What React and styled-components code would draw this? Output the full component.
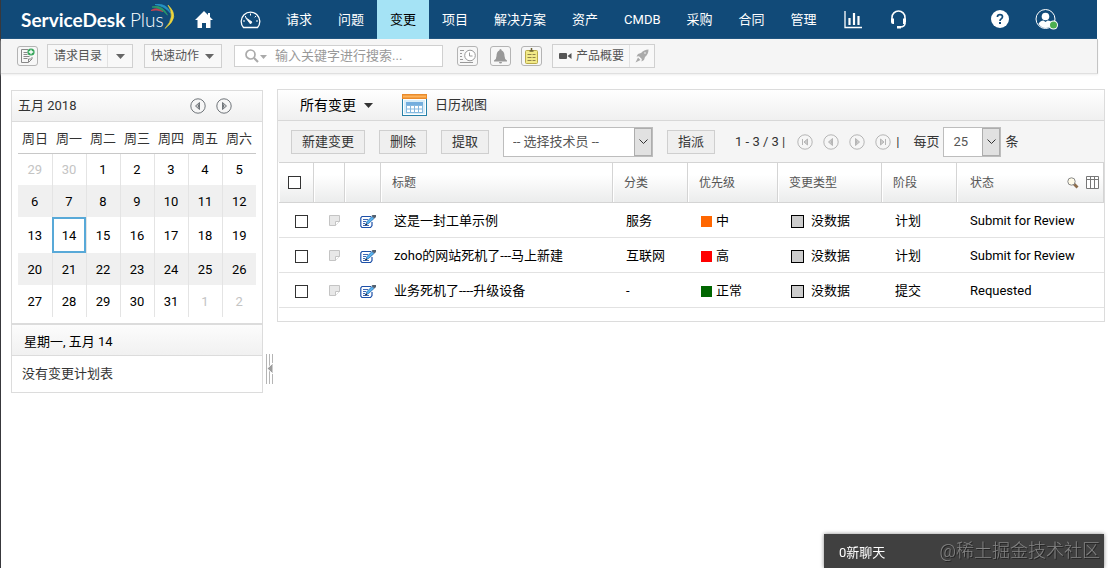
import React from "react";
import styled, { createGlobalStyle, css } from "styled-components";

const GlobalStyle = createGlobalStyle`
  *, *::before, *::after { box-sizing: border-box; }
  body {
    margin: 0;
    background: #fff;
    color: #000;
    font: 13px/18px Roboto, "Noto Sans CJK SC", sans-serif;
  }
  button, input, select { font: inherit; color: inherit; margin: 0; }
  a { color: inherit; text-decoration: none; }
  svg { display: block; flex: none; }
`;

const Page = styled.div`
  min-height: 100vh;
  border-left: 1px solid #38383c;
`;

/* Top navigation */
const TopBar = styled.header`
  display: flex;
  align-items: center;
  height: 39px;
  margin-right: 11px;
  padding: 0 39px 0 20px;
  background: #114a78;
  color: #fff;
`;

const Logo = styled.a`
  position: relative;
  width: 174px;
  font: 700 19px/24px Lato, sans-serif;
  white-space: nowrap;
  span { font-weight: 300; }
  svg { position: absolute; left: 127px; top: -6px; }
`;

const NavIcon = styled.a`
  display: flex;
  width: ${(p) => p.$width}px;
`;

const NavList = styled.nav`
  display: flex;
  align-self: stretch;
  flex: 1;
`;

const NavItem = styled.a`
  display: flex;
  align-items: center;
  padding: 0 ${(p) => (p.$icon ? 14 : 13)}px;
  white-space: nowrap;
  ${(p) => p.$active && css`background: #a5e3f5; color: #000;`}
`;

/* Quick action strip */
const ActionBar = styled.div`
  display: flex;
  align-items: center;
  height: 35px;
  margin-right: 10px;
  padding: 0 16px;
  background: #f5f5f5;
  border-right: 1px solid #c4c4c4;
  border-bottom: 1px solid #e0e0e0;
  box-shadow: 0 1px 2px #eee;
  color: #555;
  font-size: 12px;
`;

const IconButton = styled.button`
  display: flex;
  align-items: center;
  justify-content: center;
  width: 21px;
  height: 20px;
  padding: 0;
  margin-right: ${(p) => p.$gap}px;
  border: 1px solid #b4b4b4;
  border-radius: 3px;
  background: #f7f7f7;
`;

const SplitButton = styled.button`
  display: flex;
  align-items: stretch;
  height: 24px;
  padding: 0;
  margin-right: 11px;
  border: 1px solid #d0d0d0;
  background: #f8f8f8;
  white-space: nowrap;
`;

const SplitLabel = styled.span`
  display: flex;
  align-items: center;
  gap: 4px;
  padding: 0 5px 0 6px;
`;

const SplitEnd = styled.span`
  display: flex;
  align-items: center;
  justify-content: ${(p) => (p.$plain ? "flex-start" : "center")};
  width: ${(p) => p.$width}px;
  border-left: 1px solid ${(p) => (p.$plain ? "transparent" : "#e2e2e2")};
`;

const SearchBox = styled.label`
  display: flex;
  align-items: center;
  gap: 7px;
  width: 209px;
  height: 22px;
  margin: 0 14px 0 1px;
  padding-left: 10px;
  border: 1px solid #d0d0d0;
  background: #fff;
  font-size: 13px;
  input {
    flex: 1;
    min-width: 0;
    padding: 0;
    border: 0;
    outline: 0;
    background: none;
  }
  input::placeholder { color: #999; opacity: 1; }
`;

/* Body */
const Body = styled.main`
  display: flex;
  align-items: flex-start;
  padding: 15px 3px 0 10px;
`;

const Panel = styled.section`
  border: 1px solid #dcdcdc;
  background: #fff;
`;

const SidePanel = styled(Panel)`
  flex: none;
  width: 252px;
  margin-top: 1px;
`;

const MainPanel = styled(Panel)`
  flex: 1;
  min-width: 0;
  padding-bottom: 13px;
`;

const SideHead = styled.div`
  display: flex;
  align-items: center;
  gap: 10px;
  height: 31px;
  padding: 0 30px 0 6px;
  border-bottom: 1px solid #dcdcdc;
  background: linear-gradient(#fdfdfd, #f0f0f0);
  color: #333;
  h2 { flex: 1; margin: 0; font-size: 13px; font-weight: 400; }
`;

const RoundButton = styled.button`
  display: flex;
  padding: 0;
  border: 0;
  background: none;
  color: ${(p) => (p.$faint ? "#b5b5b5" : "#70757a")};
`;

const Calendar = styled.table`
  width: 238px;
  margin: 0 6px 6px;
  border-collapse: collapse;
  table-layout: fixed;
  text-align: center;
  th {
    height: 31px;
    padding: 4px 0 0;
    border-bottom: 1px solid #c8c8c8;
    font-weight: 400;
    color: #333;
  }
`;

const Week = styled.tr`
  height: ${(p) => (p.$tall ? 36 : 32)}px;
  background: ${(p) => (p.$shade ? "#f0f0f0" : "#fff")};
`;

const Day = styled.td`
  padding: 2px 0 0;
  border-right: 1px solid #e4e4e4;
  color: ${(p) => (p.$out ? "#c4c4c4" : "#000")};
  &:last-child { border-right: 0; }
  ${(p) => p.$today && css`outline: 2px solid #58a9d8; outline-offset: -2px;`}
`;

const AgendaHead = styled.h3`
  height: 33px;
  margin: 0;
  padding: 8px 12px 0;
  border-top: 2px solid #dcdcdc;
  border-bottom: 1px solid #dcdcdc;
  background: linear-gradient(#fcfcfc, #f1f1f1);
  font-size: 13px;
  font-weight: 400;
`;

const AgendaText = styled.p`
  margin: 0;
  padding: 9px 10px;
  color: #333;
`;

const Splitter = styled.button`
  align-self: center;
  display: flex;
  width: 14px;
  margin-top: 255px;
  padding: 0 3px;
  border: 0;
  background: none;
`;

const ViewBar = styled.div`
  display: flex;
  align-items: center;
  gap: 29px;
  height: 31px;
  padding: 0 22px;
  border-bottom: 1px solid #d8d8d8;
  background: linear-gradient(#fff, #f0f0f0);
`;

const ViewButton = styled.button`
  display: flex;
  align-items: center;
  gap: 8px;
  padding: 0;
  border: 0;
  background: none;
  font-size: ${(p) => (p.$main ? 14 : 13)}px;
  color: ${(p) => (p.$main ? "#000" : "#333")};
`;

const ToolBar = styled.div`
  display: flex;
  align-items: center;
  gap: 14px;
  height: 41px;
  padding: 0 13px;
  background: #f5f5f5;
  color: #333;
  white-space: nowrap;
`;

const PushButton = styled.button`
  height: 24px;
  padding: 0 10px;
  border: 1px solid #cfcfcf;
  background: #efefef;
  line-height: 20px;
`;

const SelectBox = styled.span`
  display: grid;
  grid-template-columns: minmax(0, 1fr) 18px;
  width: ${(p) => p.$width}px;
  height: 30px;
  border: 1px solid #bdbdbd;
  background: #fff;
  color: #555;
  select {
    grid-area: 1 / 1 / 2 / 3;
    appearance: none;
    padding: 0 20px 0 9px;
    border: 0;
    background: none;
  }
  span {
    grid-area: 1 / 2;
    display: flex;
    align-items: center;
    justify-content: center;
    border: 1px solid #adadad;
    background: #e1e1e1;
    pointer-events: none;
  }
`;

const Pager = styled.div`
  display: flex;
  align-items: center;
  margin-left: 6px;
`;

const PagerButtons = styled.div`
  display: flex;
  gap: 10px;
  margin: 0 5px 0 12px;
`;

const PageSize = styled.label`
  display: flex;
  align-items: center;
  gap: 4px;
`;

const Grid = styled.table`
  width: calc(100% - 1px);
  margin-left: 1px;
  border-collapse: separate;
  border-spacing: 0;
  table-layout: fixed;
  text-align: left;
`;

const HeadCell = styled.th`
  height: 41px;
  padding: 0 11px;
  border: solid #d4d4d4;
  border-width: 1px 1px 1px 0;
  box-shadow: inset 1px 0 #fff;
  background: linear-gradient(#fff 30%, #ebecec);
  color: #555;
  font-size: 12px;
  font-weight: 400;
  &:first-child { padding-left: 9px; }
`;

const HeadTools = styled.div`
  display: flex;
  align-items: center;
  justify-content: space-between;
  margin: 0 -7px 0 2px;
  div { display: flex; align-items: center; gap: 7px; }
`;

const Cell = styled.td`
  height: 35px;
  padding: 2px ${(p) => (p.$icon ? 0 : 13)}px 0;
  padding-left: ${(p) => (p.$icon ? 15 : 13)}px;
  border-bottom: 1px solid #e2e2e2;
  white-space: nowrap;
  &:first-child { padding-left: 16px; }
`;

const Check = styled.input`
  appearance: none;
  display: block;
  width: 13px;
  height: 13px;
  border: 1px solid #333;
  background: #fff;
`;

const Tagged = styled.span`
  display: flex;
  align-items: center;
  gap: ${(p) => (p.$boxed ? 7 : 4)}px;
  &::before {
    content: "";
    width: ${(p) => (p.$boxed ? 13 : 11)}px;
    height: ${(p) => (p.$boxed ? 13 : 11)}px;
    border: ${(p) => (p.$boxed ? "1px solid #000" : "0")};
    background: ${(p) => p.$color};
  }
`;

const ChatBar = styled.aside`
  position: fixed;
  right: 4px;
  bottom: 0;
  display: flex;
  align-items: center;
  justify-content: space-between;
  width: 280px;
  height: 34px;
  padding: 0 4px 0 15px;
  background: #404040;
  box-shadow: 0 0 4px #888;
  color: #fff;
  white-space: nowrap;
`;

const ChatToggle = styled.button`
  padding: 4px 0 0;
  border: 0;
  background: none;
`;

const Mark = styled.span`
  font-size: 18px;
  font-weight: 300;
  line-height: 24px;
  color: #858585;
  text-shadow: 1px 1px #222;
`;

const Caret = ({ color = "#666" }) => (
  <svg width="9" height="5"><path d="M0 0h9L4.500 5z" fill={color} /></svg>
);

const Chevron = () => (
  <svg width="9" height="6" fill="none" stroke="#333"><path d="M.5.5l4 4 4-4" /></svg>
);

const Swoosh = () => (
  <svg width="28" height="28" viewBox="0 0 28 28" fill="none">
    <path d="M3 8.500Q9 4.500 15 9.500Q9 7 3 8.500Z" fill="#c8434f" stroke="#c8434f" strokeWidth=".8" />
    <path d="M4 5Q14 2 19.500 13Q12 5 4 5Z" fill="#2c9a68" stroke="#2c9a68" strokeWidth=".8" />
    <path d="M7 2.500Q19 1 22.500 11Q16 3.500 7 2.500Z" fill="#2593c4" stroke="#2593c4" strokeWidth=".8" />
    <path d="M20 3Q33 15 17 26.500Q28 15 20 3Z" fill="#ecd53c" stroke="#ecd53c" strokeWidth=".6" />
  </svg>
);

const HomeIcon = () => (
  <svg width="18" height="18" viewBox="0 0 18 18" fill="#fff">
    <path d="M9 0L0 9h2.500v8h4.500v-5h4v5h4.500V9H18l-3-3V2h-2v2z" />
  </svg>
);

const GaugeIcon = () => (
  <svg width="21" height="18" viewBox="0 0 21 18" fill="none" stroke="#fff" strokeWidth="1.300">
    <path d="M3.500 16.500A9.300 9.300 0 1 1 17.500 16.500Z" />
    <path d="M10.500 2.500v2M3 10h2M16 10h2M5 5l1.300 1.300M16 5l-1.300 1.300" strokeWidth="1" />
    <path d="M5.500 6.500l6.500 4.500-1.500 2z" fill="#fff" strokeWidth=".8" />
  </svg>
);

const ChartIcon = () => (
  <svg width="18" height="18" viewBox="0 0 18 18" fill="none" stroke="#fff">
    <path d="M1 0v16.500h17" strokeWidth="1.300" />
    <path d="M5.500 7v7M10 2v12M14.500 5v9" strokeWidth="2.200" />
  </svg>
);

const HeadsetIcon = () => (
  <svg width="17" height="19" viewBox="0 0 17 19" fill="none" stroke="#fff" strokeWidth="1.600">
    <path d="M2 10V7.500a6.500 6.500 0 0 1 13 0V10" />
    <path d="M15 13q0 4-5 4" />
    <path d="M1 8.500h3v5.500H3q-2 0-2-2zM16 8.500h-3v5.500h1q2 0 2-2z" fill="#fff" stroke="none" />
    <rect x="7" y="16" width="4" height="2.500" fill="#fff" stroke="none" />
  </svg>
);

const HelpIcon = () => (
  <svg width="20" height="20" viewBox="0 0 20 20">
    <circle cx="10" cy="9" r="9" fill="#fff" />
    <path d="M7.400 7Q7.500 4.700 10 4.700T12.500 6.800Q12.500 8 11.200 8.900T10 11" fill="none" stroke="#114a78" strokeWidth="1.700" />
    <rect x="9" y="12" width="2" height="2" fill="#114a78" />
  </svg>
);

const UserIcon = () => (
  <svg width="24" height="22" viewBox="0 0 24 22">
    <circle cx="10.500" cy="10" r="9.500" fill="none" stroke="#fff" />
    <circle cx="10.500" cy="7.500" r="3.800" fill="#fff" />
    <path d="M3.500 15q1.500-3.500 5-3.500l2 1.500 2-1.500q4 0 5 3.500-3 4-7 4t-7-4z" fill="#fff" />
    <circle cx="18.500" cy="16" r="4.500" fill="#fff" />
    <circle cx="18.500" cy="16" r="3.500" fill="#4caf50" />
  </svg>
);

const NewRequestIcon = () => (
  <svg width="15" height="16" viewBox="0 0 15 16" fill="none" stroke="#888">
    <path d="M8 1.500H1.500v13h7l3.500-3.500V9M8.500 14v-3h3M3.500 4.500h4M3.500 6.500h4M3.500 8.500h6M3.500 10.500h4" />
    <circle cx="11" cy="4" r="3.600" fill="#37a65c" stroke="none" />
    <path d="M11 1.800v4.400M8.800 4h4.400" stroke="#fff" strokeWidth="1.300" />
  </svg>
);

const SearchIcon = () => (
  <svg width="23" height="14" viewBox="0 0 23 14" fill="none" stroke="#aaa">
    <circle cx="5.500" cy="5.500" r="4.500" strokeWidth="1.700" />
    <path d="M9 9l4 4" strokeWidth="2.200" />
    <path d="M15 6h7l-3.500 4z" fill="#aaa" stroke="none" />
  </svg>
);

const RecentIcon = () => (
  <svg width="17" height="16" viewBox="0 0 17 16" fill="none" stroke="#999">
    <circle cx="11" cy="7.500" r="5.300" fill="#fff" />
    <path d="M10.500 4.500v3.500h3M1 2.500h4M1 5.500h2M1 8.500h2M1 11.500h3M1 14.500h13" />
  </svg>
);

const BellIcon = () => (
  <svg width="15" height="15" viewBox="0 0 15 15" fill="#999">
    <path d="M7.500 0q1.200 0 1.200 1.500Q11.500 2.500 11.500 7q0 3 2.500 4.500v1H1v-1Q3.500 10 3.500 7q0-4.500 2.800-5.500Q6.300 0 7.500 0zM6 13h3q0 1.500-1.500 1.500T6 13z" />
  </svg>
);

const NotesIcon = () => (
  <svg width="15" height="17" viewBox="0 0 15 17" fill="none">
    <rect x="1.500" y="2.500" width="12" height="13" rx="1" fill="#f2ea88" stroke="#b9aa4a" />
    <path d="M5.500 3h4M7.500 0v3" stroke="#6b6130" strokeWidth="1.500" />
    <path d="M3.500 6.500h4M8.500 6.500h3M3.500 9.500h4M8.500 9.500h3M3.500 12.500h4M8.500 12.500h3" stroke="#91834a" />
  </svg>
);

const VideoIcon = () => (
  <svg width="13" height="8" viewBox="0 0 13 8" fill="#555">
    <rect y="1" width="8" height="6" rx="1" /><path d="M8.500 4L12.500 1v6z" />
  </svg>
);

const RocketIcon = () => (
  <svg width="14" height="14" viewBox="0 0 14 14" fill="#aaa">
    <path d="M13.500.5Q9 .5 6 4L3 5 1.500 7.500l2.500-.3 2.800 2.800-.3 2.500L9 11l1-3Q13.500 5 13.500.5z" />
    <path d="M3 8.500L.5 13.500l5-2.500z" />
    <circle cx="10" cy="4" r=".8" fill="#f8f8f8" />
  </svg>
);

const RoundArrow = ({ kind }) => (
  <svg width="16" height="16" viewBox="0 0 16 16" fill="none" stroke="currentColor">
    <circle cx="8" cy="8" r="7.200" fill="#f6f6f6" />
    {kind === "prev" && <path d="M9.500 4.500v7L5.500 8zM8.500 6.500v3" fill="#ccc" />}
    {kind === "next" && <path d="M6.500 4.500v7l4-3.500zM7.500 6.500v3" fill="#ccc" />}
    {kind === "first" && <path d="M5.500 5v6M10.500 5v6L7 8z" fill="#ccc" />}
    {kind === "last" && <path d="M10.500 5v6M5.500 5v6L9 8z" fill="#ccc" />}
  </svg>
);

const CalendarIcon = () => (
  <svg width="25" height="22" viewBox="0 0 25 22">
    <rect x=".5" y=".5" width="24" height="21" fill="#fff" stroke="#2580a8" />
    <path d="M0 0h25v5H0z" fill="#e98b2c" />
    <path d="M1 1.500h23v2H1z" fill="#ffb45c" />
    <path d="M2 6h21v14H2z" fill="#d8edf8" />
    <path d="M4 8h17v3H4z" fill="#74aede" />
    <path d="M4 11h17v8H4z" fill="#fff" />
    <path d="M4 11.500h17M4 15h17M4 18.500h17M4.500 11v8M8.500 11v8M12.500 11v8M16.500 11v8M20.500 11v8" stroke="#85b8df" />
  </svg>
);

const SplitterIcon = () => (
  <svg width="8" height="30" viewBox="0 0 8 30" fill="none">
    <path d="M.5 0v30M3.500 0v30M6.500 0v30" stroke="#b5b5b5" />
    <path d="M7 9v11L1 14.500z" fill="#9c9c9c" stroke="#fff" />
  </svg>
);

const NoteIcon = () => (
  <svg width="12" height="12" viewBox="0 0 12 12" fill="#e8e8e8" stroke="#c4c4c4">
    <path d="M.5.5h10v6l-4 4h-6z" /><path d="M10.500 6.500h-4v4" fill="#fff" />
  </svg>
);

const EditIcon = () => (
  <svg width="16" height="13" viewBox="0 0 16 13" fill="none">
    <path d="M11 1.500H2L.8 3v8L2 12.500h8.500l1.500-2V7" fill="#fff" stroke="#1d50a8" strokeWidth="1.200" />
    <path d="M3 4.500h5M3 6.500h3M3 8.500h2M3 10.500h6" stroke="#3c67b5" />
    <path d="M5.500 10L7 6.500 12 1.500l2 2-5.500 5z" fill="#55b3ed" stroke="#2b68ae" strokeWidth=".8" />
    <path d="M11.500 1l1-1H16v2l-1.500 1.500z" fill="#53606f" />
    <path d="M5 10.500l1-2 1.200 1z" fill="#111" />
  </svg>
);

const FindIcon = () => (
  <svg width="12" height="12" viewBox="0 0 12 12" fill="none">
    <path d="M6.500 6.500l4 4" stroke="#8c6c4a" strokeWidth="2.800" />
    <circle cx="4.500" cy="4.500" r="3.700" fill="#fffbe9" stroke="#888" />
  </svg>
);

const ColumnsIcon = () => (
  <svg width="13" height="13" viewBox="0 0 13 13" fill="#fff" stroke="#777">
    <path d="M.5.5h12v12H.5zM.5 3.500h12M4.500.5v12M8.500.5v12" />
  </svg>
);

const NAV = ["请求", "问题", "变更", "项目", "解决方案", "资产", "CMDB", "采购", "合同", "管理"];
const WEEKDAYS = ["周日", "周一", "周二", "周三", "周四", "周五", "周六"];
const WEEKS = [
  [29, 30, 1, 2, 3, 4, 5],
  [6, 7, 8, 9, 10, 11, 12],
  [13, 14, 15, 16, 17, 18, 19],
  [20, 21, 22, 23, 24, 25, 26],
  [27, 28, 29, 30, 31, 1, 2],
];
const COLUMN_WIDTHS = [35, 31, 36, null, 75, 90, 104, 75, 147];
const CHANGES = [
  { title: "这是一封工单示例", category: "服务", color: "#ff6600", priority: "中", stage: "计划", status: "Submit for Review" },
  { title: "zoho的网站死机了---马上新建", category: "互联网", color: "#ff0000", priority: "高", stage: "计划", status: "Submit for Review" },
  { title: "业务死机了----升级设备", category: "-", color: "#006600", priority: "正常", stage: "提交", status: "Requested" },
];

const isOutside = (day, week) => (week === 0 && day > 7) || (week === 4 && day < 7);

function SideCalendar() {
  return (
    <SidePanel>
      <SideHead>
        <h2>五月 2018</h2>
        <RoundButton aria-label="上个月"><RoundArrow kind="prev" /></RoundButton>
        <RoundButton aria-label="下个月"><RoundArrow kind="next" /></RoundButton>
      </SideHead>
      <Calendar>
        <thead>
          <tr>{WEEKDAYS.map((d) => <th key={d} scope="col">{d}</th>)}</tr>
        </thead>
        <tbody>
          {WEEKS.map((days, w) => (
            <Week key={w} $shade={w % 2 === 1} $tall={w === 2}>
              {days.map((d) => (
                <Day key={d} $out={isOutside(d, w)} $today={d === 14}>{d}</Day>
              ))}
            </Week>
          ))}
        </tbody>
      </Calendar>
      <AgendaHead>星期一, 五月 14</AgendaHead>
      <AgendaText>没有变更计划表</AgendaText>
    </SidePanel>
  );
}

function ChangeTable() {
  return (
    <Grid>
      <colgroup>
        {COLUMN_WIDTHS.map((w, i) => <col key={i} width={w ?? undefined} />)}
      </colgroup>
      <thead>
        <tr>
          <HeadCell><Check type="checkbox" aria-label="全选" /></HeadCell>
          <HeadCell />
          <HeadCell />
          <HeadCell>标题</HeadCell>
          <HeadCell>分类</HeadCell>
          <HeadCell>优先级</HeadCell>
          <HeadCell>变更类型</HeadCell>
          <HeadCell>阶段</HeadCell>
          <HeadCell>
            <HeadTools>
              状态
              <div>
                <RoundButton aria-label="搜索"><FindIcon /></RoundButton>
                <RoundButton aria-label="选择列"><ColumnsIcon /></RoundButton>
              </div>
            </HeadTools>
          </HeadCell>
        </tr>
      </thead>
      <tbody>
        {CHANGES.map((c) => (
          <tr key={c.title}>
            <Cell><Check type="checkbox" aria-label={c.title} /></Cell>
            <Cell $icon><NoteIcon /></Cell>
            <Cell $icon><EditIcon /></Cell>
            <Cell><a href="#change">{c.title}</a></Cell>
            <Cell>{c.category}</Cell>
            <Cell><Tagged $color={c.color}>{c.priority}</Tagged></Cell>
            <Cell><Tagged $boxed $color="#ccc">没数据</Tagged></Cell>
            <Cell>{c.stage}</Cell>
            <Cell>{c.status}</Cell>
          </tr>
        ))}
      </tbody>
    </Grid>
  );
}

export default function App() {
  return (
    <Page>
      <GlobalStyle />
      <TopBar>
        <Logo href="#top">ServiceDesk <span>Plus</span><Swoosh /></Logo>
        <NavIcon href="#home" aria-label="主页" $width={45}><HomeIcon /></NavIcon>
        <NavIcon href="#dashboard" aria-label="仪表板" $width={33}><GaugeIcon /></NavIcon>
        <NavList>
          {NAV.map((n) => (
            <NavItem key={n} href="#nav" $active={n === "变更"}>{n}</NavItem>
          ))}
          <NavItem $icon href="#reports" aria-label="报表"><ChartIcon /></NavItem>
          <NavItem $icon href="#support" aria-label="支持"><HeadsetIcon /></NavItem>
        </NavList>
        <NavIcon href="#help" aria-label="帮助" $width={45}><HelpIcon /></NavIcon>
        <NavIcon href="#user" aria-label="用户" $width={23}><UserIcon /></NavIcon>
      </TopBar>

      <ActionBar>
        <IconButton aria-label="新建请求" $gap={9}><NewRequestIcon /></IconButton>
        <SplitButton>
          <SplitLabel>请求目录</SplitLabel>
          <SplitEnd $width={25}><Caret /></SplitEnd>
        </SplitButton>
        <SplitButton>
          <SplitLabel>快速动作</SplitLabel>
          <SplitEnd $width={17} $plain><Caret /></SplitEnd>
        </SplitButton>
        <SearchBox>
          <SearchIcon />
          <input aria-label="搜索" placeholder="输入关键字进行搜索..." />
        </SearchBox>
        <IconButton aria-label="最近" $gap={12}><RecentIcon /></IconButton>
        <IconButton aria-label="通知" $gap={10}><BellIcon /></IconButton>
        <IconButton aria-label="便签" $gap={10}><NotesIcon /></IconButton>
        <SplitButton>
          <SplitLabel><VideoIcon />产品概要</SplitLabel>
          <SplitEnd $width={25}><RocketIcon /></SplitEnd>
        </SplitButton>
      </ActionBar>

      <Body>
        <SideCalendar />
        <Splitter aria-label="折叠"><SplitterIcon /></Splitter>
        <MainPanel>
          <ViewBar>
            <ViewButton $main>所有变更<Caret color="#333" /></ViewButton>
            <ViewButton><CalendarIcon />日历视图</ViewButton>
          </ViewBar>
          <ToolBar>
            <PushButton>新建变更</PushButton>
            <PushButton>删除</PushButton>
            <PushButton>提取</PushButton>
            <SelectBox $width={150}>
              <select aria-label="选择技术员"><option>-- 选择技术员 --</option></select>
              <span><Chevron /></span>
            </SelectBox>
            <PushButton>指派</PushButton>
            <Pager>
              <span>1 - 3 / 3 |</span>
              <PagerButtons>
                <RoundButton $faint aria-label="首页"><RoundArrow kind="first" /></RoundButton>
                <RoundButton $faint aria-label="上一页"><RoundArrow kind="prev" /></RoundButton>
                <RoundButton $faint aria-label="下一页"><RoundArrow kind="next" /></RoundButton>
                <RoundButton $faint aria-label="末页"><RoundArrow kind="last" /></RoundButton>
              </PagerButtons>
              <span>|</span>
            </Pager>
            <PageSize>
              每页
              <SelectBox $width={58}>
                <select><option>25</option></select>
                <span><Chevron /></span>
              </SelectBox>
              条
            </PageSize>
          </ToolBar>
          <ChangeTable />
        </MainPanel>
      </Body>

      <ChatBar>
        <ChatToggle>0新聊天</ChatToggle>
        <Mark>@稀土掘金技术社区</Mark>
      </ChatBar>
    </Page>
  );
}
